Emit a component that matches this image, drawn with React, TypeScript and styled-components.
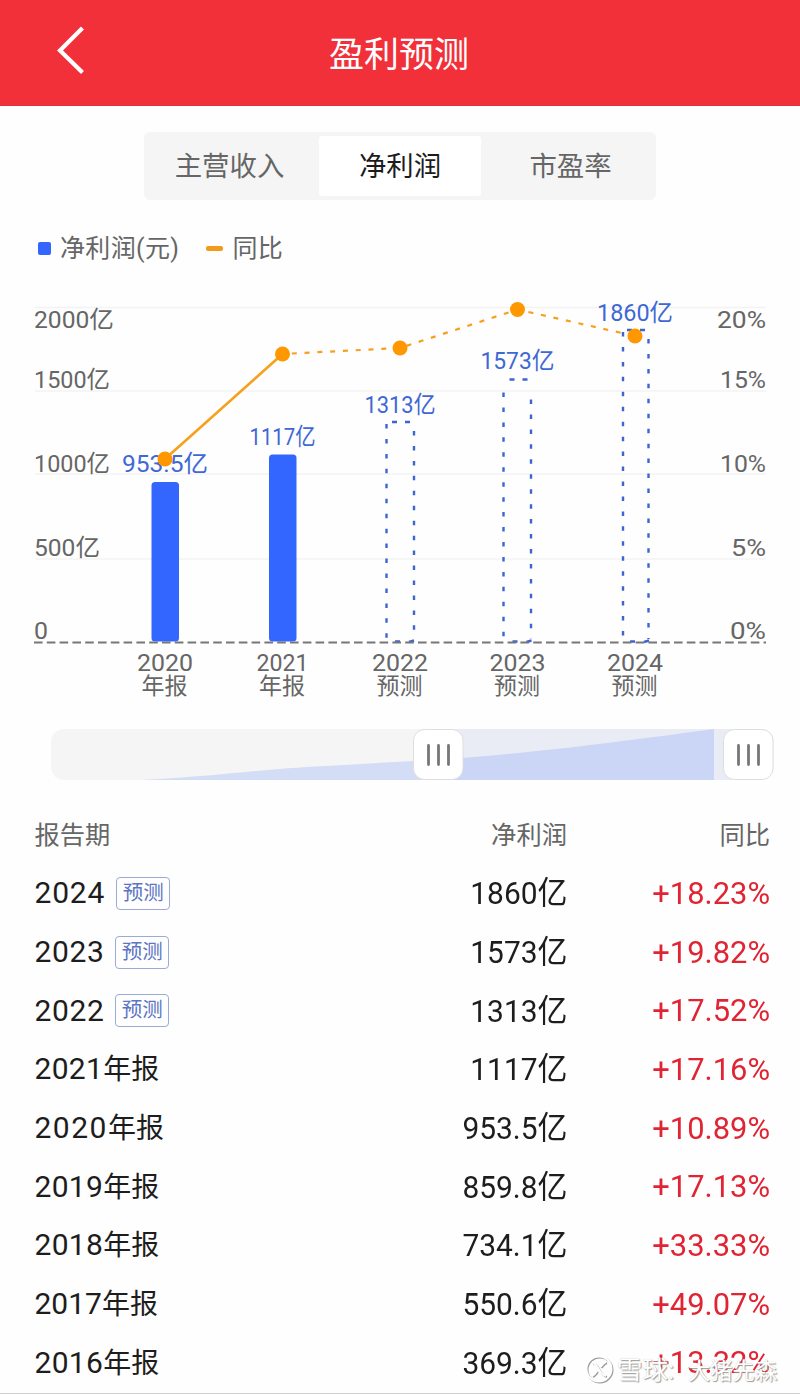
import React from 'react';
import styled, { createGlobalStyle } from 'styled-components';

const GlobalStyle = createGlobalStyle`
  body {
    margin: 0;
    background: #fefefe;
    font-family: Roboto, 'Noto Sans CJK SC', sans-serif;
  }
  * { box-sizing: border-box; }
`;

const Page = styled.div`
  position: relative;
  width: 800px;
  height: 1394px;
  overflow: hidden;
  display: flex;
  flex-direction: column;
  border-bottom: 1px solid #cfcfcf;
`;

const Header = styled.header`
  flex: none;
  height: 106px;
  display: grid;
  grid-template-columns: 120px 1fr 120px;
  align-items: center;
  background: #f23039;
  border-bottom: 1px solid #d9363b;
`;

const BackButton = styled.button`
  display: flex;
  margin: 0 0 5px 54px;
  padding: 0;
  border: 0;
  background: none;
`;

const Title = styled.h1`
  margin: 7px 2px 0 0;
  text-align: center;
  font-size: 35px;
  line-height: 50px;
  font-weight: 400;
  color: #fff;
`;

const Tabs = styled.nav`
  flex: none;
  width: 512px;
  height: 68px;
  margin: 26px auto 0;
  padding: 4px;
  display: grid;
  grid-template-columns: 171px 162px 1fr;
  background: #f5f5f5;
  border-radius: 6px;
`;

const Tab = styled.button<{ $active?: boolean; $inset?: string }>`
  padding: ${p => p.$inset ?? '2px 0 0'};
  border: 0;
  border-radius: 3px;
  font: inherit;
  font-size: 27.4px;
  line-height: 58px;
  color: ${p => (p.$active ? '#1c1c1c' : '#666')};
  background: ${p => (p.$active ? '#fff' : 'transparent')};
`;

const Legend = styled.div`
  flex: none;
  height: 40px;
  margin: 28px 0 0 38px;
  display: flex;
  align-items: center;
  font-size: 25px;
  line-height: 36px;
  color: #666;
`;

const LegendItem = styled.span`
  display: flex;
  align-items: center;
  margin-right: 27px;
`;

const LegendText = styled.span`
  padding-top: 1px;
  letter-spacing: 0.35px;
`;

const BarKey = styled.i`
  width: 13px;
  height: 13px;
  margin-right: 9px;
  border-radius: 2px;
  background: #3366ff;
`;

const LineKey = styled.i`
  width: 17px;
  height: 5px;
  margin-right: 9px;
  border-radius: 2px;
  background: #f39a1c;
`;

const Chart = styled.svg`
  flex: none;
  display: block;
  width: 800px;
  height: 442px;
`;

const Slider = styled.div`
  flex: none;
  width: 723px;
  height: 51px;
  margin: 19px 0 0 51px;
`;

const SliderTrack = styled.svg`
  display: block;
`;

const Table = styled.section`
  flex: none;
  margin: 29px 30px 0 34.5px;
`;

const Row = styled.div`
  height: 58.7px;
  display: grid;
  grid-template-columns: 300px 232.5px 1fr;
  align-items: center;
  font-size: 32px;
  color: #1d1d1d;
`;

const HeadRow = styled(Row)`
  height: 54px;
  padding-bottom: 6px;
  font-size: 25.3px;
  color: #666;
  & > :not(:first-child) { text-align: right; }
`;

const Period = styled.div`
  display: flex;
  align-items: center;
  padding-top: 1px;
  white-space: nowrap;
`;

const Year = styled.span<{ $tracking: number }>`
  font-size: 30px;
  letter-spacing: ${p => p.$tracking}px;
`;

const Suffix = styled.span`
  padding-bottom: 3px;
  font-size: 28px;
`;

const Badge = styled.span`
  width: 54px;
  height: 33px;
  margin-top: 1px;
  margin-left: 11px;
  border: 1.5px solid #9aabd8;
  border-radius: 4px;
  text-align: center;
  font-size: 20.5px;
  line-height: 31px;
  color: #5b74c4;
`;

const Amount = styled.div`
  padding-bottom: 4px;
  text-align: right;
  transform: scaleX(0.935);
  transform-origin: right;
`;

const Change = styled.div`
  padding-top: 1px;
  text-align: right;
  color: #e02433;
  transform: scaleX(0.965);
  transform-origin: right;
`;

const Watermark = styled.div`
  position: absolute;
  left: 585px;
  bottom: 5px;
  height: 38px;
  display: flex;
  align-items: center;
  color: #fff;
  font-size: 25.5px;
  white-space: nowrap;
  text-shadow: 1px 1px 1px #999, 0 0 1px #c4c4c4;
`;

const WatermarkLogo = styled.svg`
  margin-right: 4px;
  filter: drop-shadow(1px 1px 0.6px #999);
`;

const WatermarkBrand = styled.span`
  width: 71px;
  margin-top: -3px;
`;

const WatermarkName = styled.span`
  font-size: 22.3px;
`;

interface Point { x: number; year: string; yearWidth: number; kind: string; value: string; top: number; labelY: number; width: number; dotY: number }

const points: Point[] = [
  { x: 165, year: '2020', yearWidth: 56, kind: '年报', value: '953.5亿', top: 482, labelY: 472, width: 86, dotY: 459 },
  { x: 282.5, year: '2021', yearWidth: 52, kind: '年报', value: '1117亿', top: 454.5, labelY: 445, width: 66, dotY: 354 },
  { x: 400, year: '2022', yearWidth: 56, kind: '预测', value: '1313亿', top: 422, labelY: 412.5, width: 71, dotY: 348 },
  { x: 517.5, year: '2023', yearWidth: 56, kind: '预测', value: '1573亿', top: 379.5, labelY: 369, width: 74, dotY: 309.5 },
  { x: 635, year: '2024', yearWidth: 56, kind: '预测', value: '1860亿', top: 330, labelY: 321, width: 76, dotY: 336 },
];

const axis = [
  { y: 327.5, left: '2000亿', lw: 80, right: '20%', rw: 49 },
  { y: 388, left: '1500亿', lw: 76, right: '15%', rw: 46 },
  { y: 472, left: '1000亿', lw: 76, right: '10%', rw: 46 },
  { y: 556, left: '500亿', lw: 66, right: '5%', rw: 35 },
  { y: 639, left: '0', lw: 14, right: '0%', rw: 36 },
];

// left edge, right edge, start of the dashes
const sides: Record<string, [number, number, number]> = {
  '2022': [386.5, 414, 425],
  '2023': [503.5, 531, 393.5],
  '2024': [623, 648.5, 333],
};

const rows = [
  { year: '2024', forecast: true, tracking: 0.8, amount: '1860亿', change: '+18.23%' },
  { year: '2023', forecast: true, tracking: 0.6, amount: '1573亿', change: '+19.82%' },
  { year: '2022', forecast: true, tracking: 0.6, amount: '1313亿', change: '+17.52%' },
  { year: '2021', tracking: 0.3, amount: '1117亿', change: '+17.16%' },
  { year: '2020', tracking: 1.5, amount: '953.5亿', change: '+10.89%' },
  { year: '2019', tracking: 0.3, amount: '859.8亿', change: '+17.13%' },
  { year: '2018', tracking: 0.3, amount: '734.1亿', change: '+33.33%' },
  { year: '2017', tracking: 0, amount: '550.6亿', change: '+49.07%' },
  { year: '2016', tracking: 0.3, amount: '369.3亿', change: '+13.32%' },
];

function ProfitChart() {
  return (
    <Chart viewBox="0 268 800 442" fontSize="24" fill="#666">
      {[307.5, 391, 474, 559].map(y => (
        <path key={y} d={`M35 ${y}H766`} stroke="#f3f3f3" strokeWidth="1.5" />
      ))}
      {axis.map(a => (
        <g key={a.y}>
          <text x="34" y={a.y} textLength={a.lw} lengthAdjust="spacingAndGlyphs">{a.left}</text>
          <text x={766 - a.rw} y={a.y} textLength={a.rw} lengthAdjust="spacingAndGlyphs">{a.right}</text>
        </g>
      ))}
      {points.map(p => {
        const s = sides[p.year];
        return (
          <g key={p.year}>
            {s ? (
              <g fill="none" stroke="#3d64d2" strokeWidth="2.4">
                <path d={`M${s[0]} ${s[2] - 1}V639`} strokeDasharray="4.5 10.45" />
                <path d={`M${s[1]} ${s[2] + 6}V639`} strokeDasharray="4.5 10.45" />
                <path d={`M${p.x - 8} ${p.top}h5m8 0h5`} />
                <path d={`M${p.x - 5} 641.5h5m9 0.5l5 -1.5`} />
              </g>
            ) : (
              <rect x={p.x - 13.5} y={p.top} width="27.5" height={641.5 - p.top} rx="3.5" fill="#3366ff" />
            )}
            <text x={p.x - p.width / 2} y={p.labelY} textLength={p.width} lengthAdjust="spacingAndGlyphs" fill="#3f68d5">{p.value}</text>
            <text x={p.x - p.yearWidth / 2} y="671" textLength={p.yearWidth} lengthAdjust="spacingAndGlyphs">{p.year}</text>
            <text x={p.x - 0.5} y="693.5" textAnchor="middle" fontSize="23">{p.kind}</text>
          </g>
        );
      })}
      <path d="M34 642.5H766" stroke="#777" strokeWidth="2" strokeDasharray="8.6 4.2" />
      <g fill="none" stroke="#f6a01c">
        <path d="M165 459L282.5 354" strokeWidth="2.6" />
        <path d="M282.5 354L400 348L517.5 309.5L635 336" strokeWidth="2.2" strokeDasharray="5 7.8" strokeDashoffset="3.5" />
      </g>
      {points.map(p => <circle key={p.x} cx={p.x} cy={p.dotY} r="7.5" fill="#ff9800" />)}
    </Chart>
  );
}

function Handle({ x }: { x: number }) {
  return (
    <g>
      <rect x={x + 0.5} y="0.5" width="49.5" height="50" rx="11" fill="#fff" stroke="#dedede" />
      <path d={`M${x + 15.5} 16.500v19m10-19v19m10-19v19`} stroke="#777" strokeWidth="2.8" strokeLinecap="round" />
    </g>
  );
}

function RangeSlider() {
  return (
    <Slider>
      <SliderTrack width="723" height="51" viewBox="0 0 723 51">
        <rect width="723" height="51" rx="13" fill="#f5f5f5" />
        <path d="M388 0H698V51H388Z" fill="#e9ecf5" />
        <path d="M90 51C170 47 210 40 274 37C320 35 345 32 388 31V51Z" fill="#d4ddf6" />
        <path d="M388 31C450 26 520 19 571 12C605 8 640 3 663 0V51H388Z" fill="#cbd6f6" />
        <Handle x={362} />
        <Handle x={672} />
      </SliderTrack>
    </Slider>
  );
}

export default function App() {
  return (
    <Page>
      <GlobalStyle />
      <Header>
        <BackButton aria-label="返回">
          <svg width="32" height="48" viewBox="0 0 32 48" fill="none">
            <path d="M28.500 2L6 24.500L28.500 46.500" stroke="#fff" strokeWidth="4.2" />
          </svg>
        </BackButton>
        <Title>盈利预测</Title>
      </Header>
      <Tabs>
        <Tab $inset="2px 8px 0 0">主营收入</Tab>
        <Tab $active>净利润</Tab>
        <Tab $inset="2px 0 0 8px">市盈率</Tab>
      </Tabs>
      <Legend>
        <LegendItem><BarKey /><LegendText>净利润(元)</LegendText></LegendItem>
        <LegendItem><LineKey /><LegendText>同比</LegendText></LegendItem>
      </Legend>
      <ProfitChart />
      <RangeSlider />
      <Table>
        <HeadRow>
          <span>报告期</span>
          <span>净利润</span>
          <span>同比</span>
        </HeadRow>
        {rows.map(r => (
          <Row key={r.year}>
            <Period>
              <Year $tracking={r.tracking}>{r.year}</Year>
              {r.forecast ? <Badge>预测</Badge> : <Suffix>年报</Suffix>}
            </Period>
            <Amount>{r.amount}</Amount>
            <Change>{r.change}</Change>
          </Row>
        ))}
      </Table>
      <Watermark>
        <WatermarkLogo width="28" height="28" viewBox="0 0 28 28" fill="none" stroke="#fff" strokeWidth="2">
          <circle cx="14" cy="14" r="12.5" />
          <path d="M7 7C14 9 13 19 21 21M21 7C18 8 17 10 15.500 12M12 16C10 19 9 20 7 21" />
        </WatermarkLogo>
        <WatermarkBrand>雪球:</WatermarkBrand>
        <WatermarkName>大猪先森</WatermarkName>
      </Watermark>
    </Page>
  );
}
